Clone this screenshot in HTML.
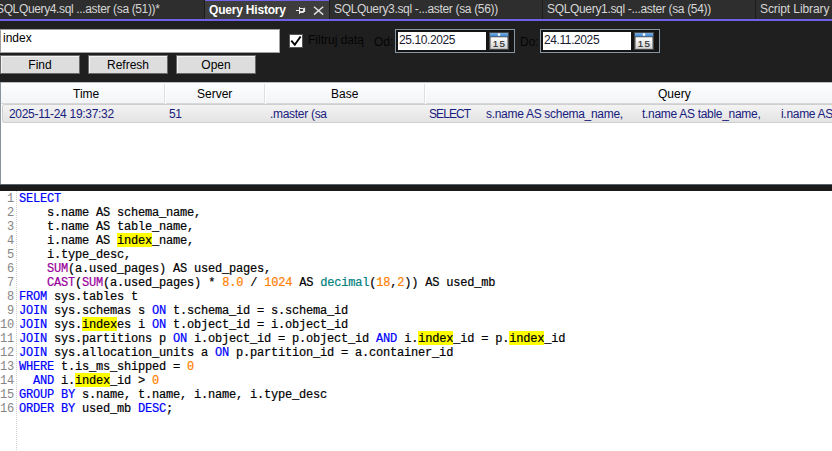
<!DOCTYPE html>
<html><head><meta charset="utf-8">
<style>
*{margin:0;padding:0;box-sizing:border-box}
html,body{width:832px;height:451px;overflow:hidden;background:#1f1f1f;font-family:"Liberation Sans",sans-serif}
.abs{position:absolute}
#tabbar{position:absolute;left:0;top:0;width:832px;height:19px;background:#2e2e2e}
#tabline{position:absolute;left:0;top:19px;width:832px;height:2px;background:#7160e8}
.sep{position:absolute;top:0;width:1px;height:19px;background:#1c1c1c}
.tabt{position:absolute;top:2px;font-size:12px;letter-spacing:-0.33px;color:#d6d6d6;white-space:pre;line-height:14px}
#atab{position:absolute;left:205px;top:0;width:124px;height:19px;background:#3d3d3d;border-top:1px solid #7160e8}
#tool{position:absolute;left:0;top:21px;width:832px;height:61px;background:#1f1f1f}
.tb{position:absolute;background:#fff}
.btn{position:absolute;top:55px;width:80px;height:19px;background:#dddddd;border:1px solid #6a6a6a;box-shadow:inset 1px 1px 0 #f4f4f4;font-size:12px;color:#000;text-align:center;line-height:19px}
.lbl{position:absolute;font-size:12px;color:#050505;white-space:pre;line-height:14px}
.dp{position:absolute;top:29px;width:120px;height:24px;border:1px solid #8696a3;background:#141414}
.dpf{position:absolute;left:2px;top:2px;width:88px;height:18px;background:#fff;font-size:12px;letter-spacing:-0.4px;color:#1a1a30;line-height:16px;padding-left:1px}
.cal{position:absolute;left:93px;top:2px;width:20px;height:18px}
#grid{position:absolute;left:0;top:82px;width:832px;height:102px;background:#fff;border-left:1px solid #8a929a}
#ghead{position:absolute;left:0;top:0;width:832px;height:22px;background:linear-gradient(#ffffff,#f2f4f7);border-bottom:1px solid #d8d8d8;box-shadow:inset 0 1px 0 #b8bfc6}
.gh{position:absolute;top:5px;font-size:12px;color:#000;white-space:pre;line-height:14px}
.gsep{position:absolute;top:2px;width:1px;height:20px;background:#e0e0e0;box-shadow:1px 0 0 #fff}
#grow{position:absolute;left:1px;top:22px;width:840px;height:19px;background:linear-gradient(#f3f3f3,#e3e3e3);border:1px solid #cfcfcf;border-radius:2px}
.gc{position:absolute;top:2px;font-size:12px;letter-spacing:-0.3px;color:#18207e;white-space:pre;line-height:14px}
#strip{position:absolute;left:0;top:184px;width:832px;height:7px;background:#1b1b1b;box-shadow:inset 0 1px 0 #5d646b}
#editor{position:absolute;left:0;top:191px;width:832px;height:260px;background:#fff}
#gutline{position:absolute;left:16px;top:0;width:1px;height:261px;background-image:linear-gradient(#cfcfcf 50%,transparent 50%);background-size:1px 2px}
.ln{position:absolute;left:0;width:14px;text-align:right;font-family:"Liberation Mono",monospace;font-size:12px;letter-spacing:-0.2px;line-height:14px;color:#858585}
#code{position:absolute;left:19px;top:1px;font-family:"Liberation Mono",monospace;font-size:12px;letter-spacing:-0.2px;-webkit-text-stroke:0.2px currentColor;line-height:14px;color:#000;white-space:pre}
.k{color:#0000ff}.f{color:#990099}.o{color:#000}.n{color:#ff8000}.t{color:#008080}
.h{padding-top:1px;background:linear-gradient(#ffff00 0,#ffff00 calc(100% - 1px),transparent calc(100% - 1px))}
</style></head><body>
<div id="tabbar">
  <div class="tabt" style="left:-4px;letter-spacing:-0.36px">SQLQuery4.sql ...aster (sa (51))*</div>
  <div class="sep" style="left:204px"></div>
  <div id="atab">
    <div class="tabt" style="left:4px;top:2px;font-weight:bold;color:#fff;letter-spacing:-0.2px">Query History</div>
    <svg class="abs" style="left:91px;top:5px" width="10" height="9" viewBox="0 0 10 9"><path d="M0 4.5H3.5M3.5 1V8M3.5 2.5H7.5V6.5H3.5" stroke="#e8e8e8" stroke-width="1" fill="none"/><path d="M4 5.5H8.5V1.8" stroke="#e8e8e8" stroke-width="1.2" fill="none"/></svg>
    <svg class="abs" style="left:108px;top:5px" width="12" height="10" viewBox="0 0 12 10"><path d="M1 0.7L10.2 8.6M10.2 0.7L1 8.6" stroke="#e0e0e0" stroke-width="1.4" fill="none"/></svg>
  </div>
  <div class="sep" style="left:329px"></div>
  <div class="tabt" style="left:334px">SQLQuery3.sql -...aster (sa (56))</div>
  <div class="sep" style="left:542px"></div>
  <div class="tabt" style="left:547px">SQLQuery1.sql -...aster (sa (54))</div>
  <div class="sep" style="left:755px"></div>
  <div class="tabt" style="left:760px;letter-spacing:-0.1px">Script Library</div>
</div>
<div id="tabline"></div>
<div id="tool"></div>
<div class="tb" style="left:0;top:29px;width:280px;height:24px;border:1px solid #a0a0a0;font-size:12px;line-height:16px;padding-left:2px;color:#000">index</div>
<div class="abs" style="left:289px;top:34px;width:14px;height:14px;background:#fff;border:1px solid #555"><svg class="abs" style="left:0px;top:0px" width="12" height="12" viewBox="0 0 12 12"><path d="M1.3 5.6L4.8 9.8L10.6 1.5" stroke="#000" stroke-width="1.9" fill="none"/></svg></div>
<div class="lbl" style="left:308px;top:33px">Filtruj datą</div>
<div class="lbl" style="left:374px;top:35px">Od:</div>
<div class="dp" style="left:395px"><div class="dpf">25.10.2025</div><svg class="cal" viewBox="0 0 20 18"><defs><linearGradient id="cg" x1="0" y1="0" x2="0" y2="1"><stop offset="0" stop-color="#ffffff"/><stop offset="1" stop-color="#d2d2d2"/></linearGradient><linearGradient id="cb" x1="0" y1="0" x2="0" y2="1"><stop offset="0" stop-color="#74aee6"/><stop offset="1" stop-color="#3f84cc"/></linearGradient></defs><rect x="0" y="0" width="20" height="18" fill="#474747"/><rect x="1" y="1" width="18" height="3.6" fill="url(#cb)"/><rect x="1" y="4.6" width="18" height="0.8" fill="#5d6b78"/><rect x="1" y="5.4" width="18" height="11.6" fill="#9a9a9a"/><rect x="2" y="5.4" width="16" height="11.2" fill="url(#cg)"/><circle cx="10" cy="2.6" r="1.3" fill="#fff"/><text x="10.6" y="14.8" font-family="Liberation Sans" font-size="9.8" letter-spacing="1.3" fill="#2b2b2b" stroke="#2b2b2b" stroke-width="0.2" text-anchor="middle">15</text></svg></div>
<div class="lbl" style="left:520px;top:35px">Do:</div>
<div class="dp" style="left:540px"><div class="dpf">24.11.2025</div><svg class="cal" viewBox="0 0 20 18"><defs><linearGradient id="cg" x1="0" y1="0" x2="0" y2="1"><stop offset="0" stop-color="#ffffff"/><stop offset="1" stop-color="#d2d2d2"/></linearGradient><linearGradient id="cb" x1="0" y1="0" x2="0" y2="1"><stop offset="0" stop-color="#74aee6"/><stop offset="1" stop-color="#3f84cc"/></linearGradient></defs><rect x="0" y="0" width="20" height="18" fill="#474747"/><rect x="1" y="1" width="18" height="3.6" fill="url(#cb)"/><rect x="1" y="4.6" width="18" height="0.8" fill="#5d6b78"/><rect x="1" y="5.4" width="18" height="11.6" fill="#9a9a9a"/><rect x="2" y="5.4" width="16" height="11.2" fill="url(#cg)"/><circle cx="10" cy="2.6" r="1.3" fill="#fff"/><text x="10.6" y="14.8" font-family="Liberation Sans" font-size="9.8" letter-spacing="1.3" fill="#2b2b2b" stroke="#2b2b2b" stroke-width="0.2" text-anchor="middle">15</text></svg></div>
<div class="btn" style="left:0">Find</div>
<div class="btn" style="left:88px">Refresh</div>
<div class="btn" style="left:176px">Open</div>

<div id="grid">
  <div id="ghead">
    <div class="gh" style="left:72px">Time</div>
    <div class="gsep" style="left:163px"></div>
    <div class="gh" style="left:196px">Server</div>
    <div class="gsep" style="left:263px"></div>
    <div class="gh" style="left:330px">Base</div>
    <div class="gsep" style="left:423px"></div>
    <div class="gh" style="left:657px">Query</div>
  </div>
  <div id="grow">
    <div class="gc" style="left:6px">2025-11-24 19:37:32</div>
    <div class="gc" style="left:166px">51</div>
    <div class="gc" style="left:267px">.master (sa</div>
    <div class="gc" style="left:426px;letter-spacing:-0.9px">SELECT</div>
    <div class="gc" style="left:483px">s.name AS schema_name,</div>
    <div class="gc" style="left:639px">t.name AS table_name,</div>
    <div class="gc" style="left:778px">i.name AS index_name,</div>
  </div>
</div>
<div id="strip"></div>
<div id="editor">
  <div id="gutline"></div>
  <div class="ln" style="top:1px">1</div>
  <div class="ln" style="top:15px">2</div>
  <div class="ln" style="top:29px">3</div>
  <div class="ln" style="top:43px">4</div>
  <div class="ln" style="top:57px">5</div>
  <div class="ln" style="top:71px">6</div>
  <div class="ln" style="top:85px">7</div>
  <div class="ln" style="top:99px">8</div>
  <div class="ln" style="top:113px">9</div>
  <div class="ln" style="top:127px">10</div>
  <div class="ln" style="top:141px">11</div>
  <div class="ln" style="top:155px">12</div>
  <div class="ln" style="top:169px">13</div>
  <div class="ln" style="top:183px">14</div>
  <div class="ln" style="top:197px">15</div>
  <div class="ln" style="top:211px">16</div>
<div id="code"><span class="k">SELECT</span>
    s.name AS schema_name,
    t.name AS table_name,
    i.name AS <span class="h">index</span>_name,
    i.type_desc,
    <span class="f">SUM</span><span class="o">(</span>a.used_pages<span class="o">)</span> AS used_pages,
    <span class="f">CAST</span><span class="o">(</span><span class="f">SUM</span><span class="o">(</span>a.used_pages<span class="o">)</span> <span class="o">*</span> <span class="n">8.0</span> <span class="o">/</span> <span class="n">1024</span> AS <span class="t">decimal</span><span class="o">(</span><span class="n">18</span><span class="o">,</span><span class="n">2</span><span class="o">))</span> AS used_mb
<span class="k">FROM</span> sys.tables t
<span class="k">JOIN</span> sys.schemas s <span class="k">ON</span> t.schema_id <span class="o">=</span> s.schema_id
<span class="k">JOIN</span> sys.<span class="h">index</span>es i <span class="k">ON</span> t.object_id <span class="o">=</span> i.object_id
<span class="k">JOIN</span> sys.partitions p <span class="k">ON</span> i.object_id <span class="o">=</span> p.object_id <span class="k">AND</span> i.<span class="h">index</span>_id <span class="o">=</span> p.<span class="h">index</span>_id
<span class="k">JOIN</span> sys.allocation_units a <span class="k">ON</span> p.partition_id <span class="o">=</span> a.container_id
<span class="k">WHERE</span> t.is_ms_shipped <span class="o">=</span> <span class="n">0</span>
  <span class="k">AND</span> i.<span class="h">index</span>_id <span class="o">&gt;</span> <span class="n">0</span>
<span class="k">GROUP BY</span> s.name, t.name, i.name, i.type_desc
<span class="k">ORDER BY</span> used_mb <span class="k">DESC</span>;</div>
</div>
</body></html>
